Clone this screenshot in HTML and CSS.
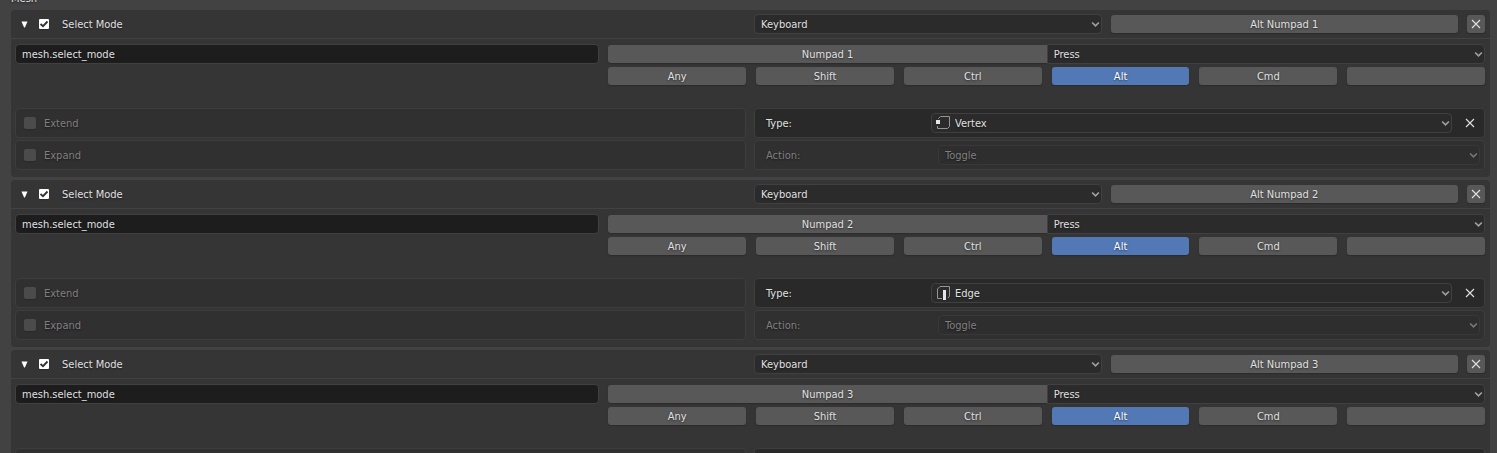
FILE: index.html
```html
<!DOCTYPE html>
<html lang="en">
<head>
<meta charset="utf-8">
<title>Keymap</title>
<link rel="stylesheet" href="styles.css">
</head>
<body>
<svg class="defs" aria-hidden="true">
  <symbol id="chevron" viewBox="0 0 8 6"><path d="M1 1.2 4 4.2 7 1.2" fill="none" stroke="currentColor" stroke-width="1.5"/></symbol>
  <symbol id="cross" viewBox="0 0 10 10"><path d="M1 1 9 9M9 1 1 9" fill="none" stroke="currentColor" stroke-width="1.1"/></symbol>
  <symbol id="triangle" viewBox="0 0 6 7"><path d="M0 .5H6L3.4 6.5H2.6Z" fill="currentColor"/></symbol>
  <symbol id="vertex" viewBox="0 0 14 14"><path d="M2.500 3V2.500L4.500 .5H13.500V10.500L11.500 12.500H1.500V10" fill="none" stroke="#949494"/><path d="M0 4H4V8H0Z" fill="#e6e6e6"/></symbol>
  <symbol id="edge" viewBox="0 0 14 14"><path d="M6 12.500H1.500V3L4 .5H13.500V10L12 12" fill="none" stroke="#949494"/><path d="M7 4H10V14H7Z" fill="#e6e6e6"/></symbol>
  <symbol id="face" viewBox="0 0 14 14"><path d="M1.500 12.500V3L4 .5H13.500V10L11 12.500Z" fill="none" stroke="#949494"/><path d="M3 5H9V11H3Z" fill="#e6e6e6"/></symbol>
</svg>
<main class="keymap">
  <h2 class="group-title">Mesh</h2>

  <section class="item">
    <header class="item-head">
      <div class="item-name">
        <button class="fold" aria-label="Collapse"><svg><use href="#triangle"/></svg></button>
        <label class="check"><input type="checkbox" checked><span>Select Mode</span></label>
      </div>
      <div class="item-map">
        <span class="dropdown"><select aria-label="Map type"><option>Keyboard</option></select><svg class="chevron"><use href="#chevron"/></svg></span>
        <button class="btn">Alt Numpad 1</button>
        <button class="btn remove" aria-label="Remove"><svg class="cross"><use href="#cross"/></svg></button>
      </div>
    </header>
    <div class="item-body">
      <div class="binding">
        <input class="operator" type="text" value="mesh.select_mode" aria-label="Operator">
        <div class="keys">
          <div class="event"><button class="btn">Numpad 1</button><span class="dropdown"><select aria-label="Event value"><option>Press</option></select><svg class="chevron"><use href="#chevron"/></svg></span></div>
          <div class="modifiers"><button class="btn">Any</button><button class="btn">Shift</button><button class="btn">Ctrl</button><button class="btn active">Alt</button><button class="btn">Cmd</button><button class="btn" aria-label="Key modifier"></button></div>
        </div>
      </div>
      <div class="props">
        <div class="prop unset"><label class="check"><input type="checkbox"><span>Extend</span></label></div>
        <div class="prop set"><label class="prop-name" for="type1">Type:</label><span class="dropdown with-icon"><select id="type1"><option>Vertex</option></select><svg class="mode"><use href="#vertex"/></svg><svg class="chevron"><use href="#chevron"/></svg></span><button class="clear" aria-label="Unset"><svg class="cross"><use href="#cross"/></svg></button></div>
        <div class="prop unset"><label class="check"><input type="checkbox"><span>Expand</span></label></div>
        <div class="prop unset"><label class="prop-name" for="action1">Action:</label><span class="dropdown"><select id="action1"><option>Toggle</option></select><svg class="chevron"><use href="#chevron"/></svg></span></div>
      </div>
    </div>
  </section>

  <section class="item">
    <header class="item-head">
      <div class="item-name">
        <button class="fold" aria-label="Collapse"><svg><use href="#triangle"/></svg></button>
        <label class="check"><input type="checkbox" checked><span>Select Mode</span></label>
      </div>
      <div class="item-map">
        <span class="dropdown"><select aria-label="Map type"><option>Keyboard</option></select><svg class="chevron"><use href="#chevron"/></svg></span>
        <button class="btn">Alt Numpad 2</button>
        <button class="btn remove" aria-label="Remove"><svg class="cross"><use href="#cross"/></svg></button>
      </div>
    </header>
    <div class="item-body">
      <div class="binding">
        <input class="operator" type="text" value="mesh.select_mode" aria-label="Operator">
        <div class="keys">
          <div class="event"><button class="btn">Numpad 2</button><span class="dropdown"><select aria-label="Event value"><option>Press</option></select><svg class="chevron"><use href="#chevron"/></svg></span></div>
          <div class="modifiers"><button class="btn">Any</button><button class="btn">Shift</button><button class="btn">Ctrl</button><button class="btn active">Alt</button><button class="btn">Cmd</button><button class="btn" aria-label="Key modifier"></button></div>
        </div>
      </div>
      <div class="props">
        <div class="prop unset"><label class="check"><input type="checkbox"><span>Extend</span></label></div>
        <div class="prop set"><label class="prop-name" for="type2">Type:</label><span class="dropdown with-icon"><select id="type2"><option>Edge</option></select><svg class="mode"><use href="#edge"/></svg><svg class="chevron"><use href="#chevron"/></svg></span><button class="clear" aria-label="Unset"><svg class="cross"><use href="#cross"/></svg></button></div>
        <div class="prop unset"><label class="check"><input type="checkbox"><span>Expand</span></label></div>
        <div class="prop unset"><label class="prop-name" for="action2">Action:</label><span class="dropdown"><select id="action2"><option>Toggle</option></select><svg class="chevron"><use href="#chevron"/></svg></span></div>
      </div>
    </div>
  </section>

  <section class="item">
    <header class="item-head">
      <div class="item-name">
        <button class="fold" aria-label="Collapse"><svg><use href="#triangle"/></svg></button>
        <label class="check"><input type="checkbox" checked><span>Select Mode</span></label>
      </div>
      <div class="item-map">
        <span class="dropdown"><select aria-label="Map type"><option>Keyboard</option></select><svg class="chevron"><use href="#chevron"/></svg></span>
        <button class="btn">Alt Numpad 3</button>
        <button class="btn remove" aria-label="Remove"><svg class="cross"><use href="#cross"/></svg></button>
      </div>
    </header>
    <div class="item-body">
      <div class="binding">
        <input class="operator" type="text" value="mesh.select_mode" aria-label="Operator">
        <div class="keys">
          <div class="event"><button class="btn">Numpad 3</button><span class="dropdown"><select aria-label="Event value"><option>Press</option></select><svg class="chevron"><use href="#chevron"/></svg></span></div>
          <div class="modifiers"><button class="btn">Any</button><button class="btn">Shift</button><button class="btn">Ctrl</button><button class="btn active">Alt</button><button class="btn">Cmd</button><button class="btn" aria-label="Key modifier"></button></div>
        </div>
      </div>
      <div class="props">
        <div class="prop unset"></div>
        <div class="prop set"></div>
      </div>
    </div>
  </section>
</main>
</body>
</html>
```
FILE: styles.css
```css
* { box-sizing: border-box; }

body {
  margin: 0;
  height: 100vh;
  overflow: hidden;
  background: #424242;
  color: #e0e0e0;
  font: 11px/14px "DejaVu Sans Condensed", "DejaVu Sans", sans-serif;
  text-shadow: 0 1px 2px rgba(0, 0, 0, .5);
}

button, input, select {
  margin: 0;
  font: inherit;
  color: inherit;
  text-shadow: inherit;
}

.defs { display: none; }

.keymap { padding: 0 7px 0 11px; }

.group-title {
  display: flex;
  align-items: flex-end;
  height: 6px;
  margin: 0 0 4px;
  font-size: 11px;
  font-weight: normal;
}

.item {
  margin-bottom: 3px;
  border-radius: 4px;
  background: #353535;
}

.item-head {
  display: grid;
  grid-template-columns: 1fr 1fr;
  gap: 8px;
  height: 29px;
  padding: 4px 5px 0 4px;
  border-bottom: 1px solid #424242;
}

.item-name {
  display: flex;
  align-items: center;
  height: 20px;
  padding-left: 6px;
}

.fold {
  display: flex;
  padding: 0;
  border: 0;
  background: none;
  color: #fff;
}

.fold svg { width: 7px; height: 7px; }

.item-name .check { margin-left: 11px; gap: 13px; }

.check {
  display: flex;
  align-items: center;
  gap: 8px;
}

.check span { padding-top: 2px; }

.check input {
  appearance: none;
  width: 12px;
  height: 12px;
  border-radius: 2px;
  background: #4b4b4b;
  box-shadow: 0 1px 1px #2a2a2a;
}

.check input:checked {
  width: 10px;
  height: 10px;
  border-radius: 1px;
  background: #fff url("data:image/svg+xml,%3Csvg xmlns='http://www.w3.org/2000/svg' viewBox='0 0 10 10'%3E%3Cpath d='M1.500 5 4 7.200 8.500 2.500' fill='none' stroke='%23333' stroke-width='1.900'/%3E%3C/svg%3E");
}

.item-map {
  display: flex;
  align-items: center;
  height: 20px;
  gap: 9px;
}

.item-map > * { flex: 1; }

.btn {
  display: flex;
  align-items: center;
  justify-content: center;
  height: 18px;
  padding: 2px 0 0;
  border: 0;
  border-radius: 3px;
  background: #585858;
  box-shadow: 0 1px 1px #2c2c2c;
}

.btn.active { background: #5279b5; color: #fff; }

.item-map > .remove { flex: 0 0 18px; padding: 0; }

.cross { width: 10px; height: 10px; }

.dropdown {
  position: relative;
  display: block;
  height: 20px;
}

.dropdown select {
  appearance: none;
  display: block;
  width: 100%;
  height: 20px;
  padding: 2px 20px 0 6px;
  border: 1px solid #404040;
  border-radius: 4px;
  background: #2b2b2b;
}

.chevron {
  position: absolute;
  right: 2px;
  top: 7px;
  width: 9px;
  height: 7px;
  color: #a0a0a0;
}

.mode {
  position: absolute;
  left: 5px;
  top: 3px;
  width: 14px;
  height: 14px;
}

.dropdown.with-icon select { padding-left: 23px; }

.item-body { padding: 5px 5px 7px 4px; }

.binding {
  display: grid;
  grid-template-columns: 2fr 3fr;
  align-items: start;
  gap: 9px;
}

.operator {
  width: 100%;
  height: 20px;
  padding: 0 6px;
  border: 1px solid #404040;
  border-radius: 4px;
  background: #1d1d1d;
}

.event {
  display: grid;
  grid-template-columns: 1fr 1fr;
  align-items: center;
}

.event .btn { border-radius: 3px 0 0 3px; }

.event select { border-radius: 0 4px 4px 0; }

.modifiers {
  display: grid;
  grid-template-columns: repeat(6, 1fr);
  gap: 10px;
  padding-top: 3px;
}

.props {
  display: grid;
  grid-template-columns: 1fr 1fr;
  gap: 2px 8px;
  margin-top: 23px;
}

.prop {
  display: flex;
  align-items: center;
  height: 30px;
  padding: 0 4px 0 8px;
  border: 1px solid #3d3d3d;
  border-radius: 4px;
  background: #303030;
}

.prop.set { background: #292929; }

.prop-name { flex: 0 0 168px; padding: 2px 0 0 3px; }

.prop .dropdown { flex: 1; }

.unset { color: #808080; }

.unset .prop-name { flex-basis: 175px; }

.unset .dropdown select { border-color: #383838; background: #2e2e2e; }

.unset .chevron { color: #777; }

.clear {
  display: flex;
  align-items: center;
  justify-content: center;
  width: 28px;
  height: 20px;
  padding: 0 0 0 8px;
  border: 0;
  background: none;
}
```
